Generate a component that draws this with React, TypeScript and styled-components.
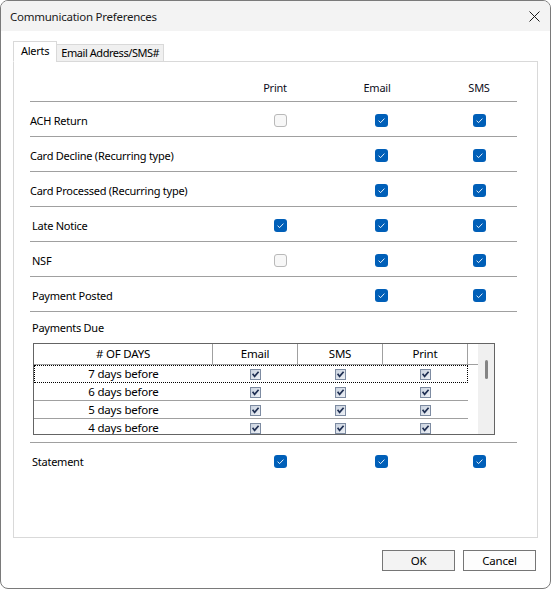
import React from 'react'
import styled, { createGlobalStyle } from 'styled-components'

type Tri = boolean | null

interface AlertRow {
  label: string
  print: Tri
  email: Tri
  sms: Tri
  indent?: number
}

const alerts: AlertRow[] = [
  { label: 'ACH Return', print: false, email: true, sms: true },
  { label: 'Card Decline (Recurring type)', print: null, email: true, sms: true },
  { label: 'Card Processed (Recurring type)', print: null, email: true, sms: true },
  { label: 'Late Notice', print: true, email: true, sms: true, indent: 2 },
  { label: 'NSF', print: false, email: true, sms: true, indent: 2 },
  { label: 'Payment Posted', print: null, email: true, sms: true, indent: 2 },
]

const dueDays = ['7 days before', '6 days before', '5 days before', '4 days before']

const GlobalStyle = createGlobalStyle`
  html, body {
    margin: 0;
    padding: 0;
    background: #ffffff;
  }
  * {
    box-sizing: border-box;
  }
`

const Check: React.FC<{ checked: boolean }> = ({ checked }) => (
  <Box $checked={checked}>
    {checked && (
      <svg width="13" height="13" viewBox="0 0 13 13">
        <polyline points="3.6,6.7 5.6,8.6 9.4,4.6" fill="none" stroke="#ffffff" strokeWidth="0.9" />
      </svg>
    )}
  </Box>
)

const LegacyCheck: React.FC = () => (
  <OldBox>
    <svg width="9" height="9" viewBox="0 0 9 9">
      <polyline points="1.6,3.8 3.6,6.4 7.6,1.8" fill="none" stroke="#1f2f52" strokeWidth="1.7" />
    </svg>
  </OldBox>
)

const Cell: React.FC<{ value: Tri }> = ({ value }) => (
  <Col>{value === null ? null : <Check checked={value} />}</Col>
)

const App: React.FC = () => {
  return (
    <>
      <GlobalStyle />
      <Window>
        <TitleBar>
          <Title>Communication Preferences</Title>
          <CloseButton>
            <svg width="11" height="11" viewBox="0 0 11 11">
              <path d="M0.5 0.5 L10.5 10.5 M10.5 0.5 L0.5 10.5" stroke="#1b1b1b" strokeWidth="1" />
            </svg>
          </CloseButton>
        </TitleBar>
        <Body>
          <TabStrip>
            <Tab $active>Alerts</Tab>
            <Tab>Email Address/SMS#</Tab>
          </TabStrip>
          <Panel>
            <List>
              <HeaderRow>
                <span />
                <HeadCol $shift={10}>Print</HeadCol>
                <HeadCol $shift={8}>Email</HeadCol>
                <HeadCol $shift={0}>SMS</HeadCol>
              </HeaderRow>
              {alerts.map(a => (
                <Row key={a.label}>
                  <Label $indent={a.indent ?? 0}>{a.label}</Label>
                  <Cell value={a.print} />
                  <Cell value={a.email} />
                  <Cell value={a.sms} />
                </Row>
              ))}
              <DueSection>
                <Label $indent={2}>Payments Due</Label>
                <Grid>
                  <GridMain>
                    <GridHead>
                      <GridHeadCell $w={179}># OF DAYS</GridHeadCell>
                      <GridHeadCell $w={85}>Email</GridHeadCell>
                      <GridHeadCell $w={85}>SMS</GridHeadCell>
                      <GridHeadCell $w={85}>Print</GridHeadCell>
                    </GridHead>
                    {dueDays.map((d, i) => (
                      <GridRow key={d} $focused={i === 0}>
                        <GridCell $w={179}>{d}</GridCell>
                        <GridCell $w={85}><LegacyCheck /></GridCell>
                        <GridCell $w={85}><LegacyCheck /></GridCell>
                        <GridCell $w={85}><LegacyCheck /></GridCell>
                      </GridRow>
                    ))}
                  </GridMain>
                  <ScrollTrack>
                    <Thumb />
                  </ScrollTrack>
                </Grid>
              </DueSection>
              <Row $last>
                <Label $indent={2}>Statement</Label>
                <Cell value={true} />
                <Cell value={true} />
                <Cell value={true} />
              </Row>
            </List>
          </Panel>
          <Footer>
            <Button $primary>OK</Button>
            <Button>Cancel</Button>
          </Footer>
        </Body>
      </Window>
    </>
  )
}

const Window = styled.div`
  width: 551px;
  height: 589px;
  border: 1px solid #7a7a7a;
  border-radius: 8px;
  overflow: hidden;
  display: flex;
  flex-direction: column;
  background: #ffffff;
  font-family: "Segoe UI", "Noto Sans", sans-serif;
  font-size: 11px;
  letter-spacing: -0.25px;
  color: #000000;
`

const TitleBar = styled.div`
  height: 30px;
  flex: none;
  background: #f3f3f3;
  display: flex;
  align-items: center;
  justify-content: space-between;
  padding: 0 9px 0 9px;
`

const Title = styled.div`
  font-size: 11.5px;
  color: #1a1a1a;
  margin-top: 1px;
`

const CloseButton = styled.div`
  width: 11px;
  height: 11px;
  display: flex;
  margin-right: 1px;
  margin-top: 1px;
`

const Body = styled.div`
  flex: 1;
  display: flex;
  flex-direction: column;
  padding: 10px 12px 0 12px;
`

const TabStrip = styled.div`
  display: flex;
  align-items: flex-end;
  margin-bottom: -1px;
  position: relative;
  z-index: 1;
`

const Tab = styled.div<{ $active?: boolean }>`
  height: ${p => (p.$active ? 21 : 18)}px;
  padding: ${p => (p.$active ? '2px 7px 0 7px' : '1px 4px 0 4px')};
  border: 1px solid #d9d9d9;
  border-bottom: 1px solid ${p => (p.$active ? '#ffffff' : '#d9d9d9')};
  background: ${p => (p.$active ? '#ffffff' : '#f0f0f0')};
  margin-left: ${p => (p.$active ? 0 : -1)}px;
  font-size: 11px;
  letter-spacing: ${p => (p.$active ? -0.25 : -0.45)}px;
  line-height: 14px;
  white-space: nowrap;
`

const Panel = styled.div`
  flex: 1;
  border: 1px solid #d9d9d9;
  background: #ffffff;
  padding: 13px 19px 0 16px;
`

const List = styled.div`
  width: 487px;
  display: flex;
  flex-direction: column;
`

const columns = `
  display: grid;
  grid-template-columns: 1fr 82px 120px 76px;
  align-items: center;
`

const HeaderRow = styled.div`
  ${columns};
  height: 27px;
  border-bottom: 1px solid #a0a0a0;
  padding-bottom: 2px;
`

const HeadCol = styled.div<{ $shift: number }>`
  text-align: center;
  padding-right: ${p => p.$shift}px;
  color: #0d0d1a;
`

const Row = styled.div<{ $last?: boolean }>`
  ${columns};
  height: 35px;
  padding-top: ${p => (p.$last ? 1 : 3)}px;
  border-bottom: ${p => (p.$last ? 'none' : '1px solid #a0a0a0')};
`

const Label = styled.div<{ $indent: number }>`
  padding-left: ${p => p.$indent}px;
  white-space: nowrap;
`

const Col = styled.div`
  display: flex;
  justify-content: center;
  height: 13px;
`

const Box = styled.span<{ $checked: boolean }>`
  width: 13px;
  height: 13px;
  border-radius: 3px;
  display: block;
  background: ${p => (p.$checked ? '#005fb8' : '#f7f7f7')};
  border: ${p => (p.$checked ? 'none' : '1px solid #b9b9b9')};
`

const DueSection = styled.div`
  display: flex;
  flex-direction: column;
  padding-top: 9px;
  padding-bottom: 7px;
  border-bottom: 1px solid #a0a0a0;
  line-height: 14px;

  & > ${Label} {
    margin-bottom: 8px;
  }
`

const Grid = styled.div`
  margin-left: 3px;
  width: 462px;
  height: 92px;
  border: 1px solid #646464;
  display: flex;
  overflow: hidden;
  font-size: 11.5px;
  letter-spacing: -0.2px;
`

const GridMain = styled.div`
  flex: 1;
  display: flex;
  flex-direction: column;
`

const GridHead = styled.div`
  display: flex;
  height: 21px;
  flex: none;
  border-bottom: 1px solid #a0a0a0;
`

const GridHeadCell = styled.div<{ $w: number }>`
  width: ${p => p.$w}px;
  border-right: 1px solid #a0a0a0;
  display: flex;
  align-items: center;
  justify-content: center;
`

const GridRow = styled.div<{ $focused?: boolean }>`
  display: flex;
  height: 18px;
  flex: none;
  width: 434px;
  border-bottom: 1px solid ${p => (p.$focused ? 'transparent' : '#a0a0a0')};
  outline: ${p => (p.$focused ? '1px dotted #000000' : 'none')};
  outline-offset: -1px;
`

const GridCell = styled.div<{ $w: number }>`
  width: ${p => p.$w}px;
  display: flex;
  align-items: center;
  justify-content: center;
  padding-top: 1px;
`

const OldBox = styled.span`
  width: 11px;
  height: 11px;
  border: 1px solid #7d8ba1;
  background: linear-gradient(135deg, #c9d2df, #eef1f6);
  display: flex;
  align-items: center;
  justify-content: center;
`

const ScrollTrack = styled.div`
  width: 16px;
  flex: none;
  background: #f0f0f0;
  padding: 16px 0 0 7px;
`

const Thumb = styled.div`
  width: 3px;
  height: 19px;
  border-radius: 2px;
  background: #858585;
`

const Footer = styled.div`
  display: flex;
  justify-content: flex-end;
  gap: 8px;
  padding: 12px 2px 17px 0;
`

const Button = styled.div<{ $primary?: boolean }>`
  width: 73px;
  height: 21px;
  border: 1px solid #767676;
  background: ${p => (p.$primary ? '#f3f3f3' : '#fdfdfd')};
  display: flex;
  align-items: center;
  justify-content: center;
  font-size: 11.5px;
`

export default App
